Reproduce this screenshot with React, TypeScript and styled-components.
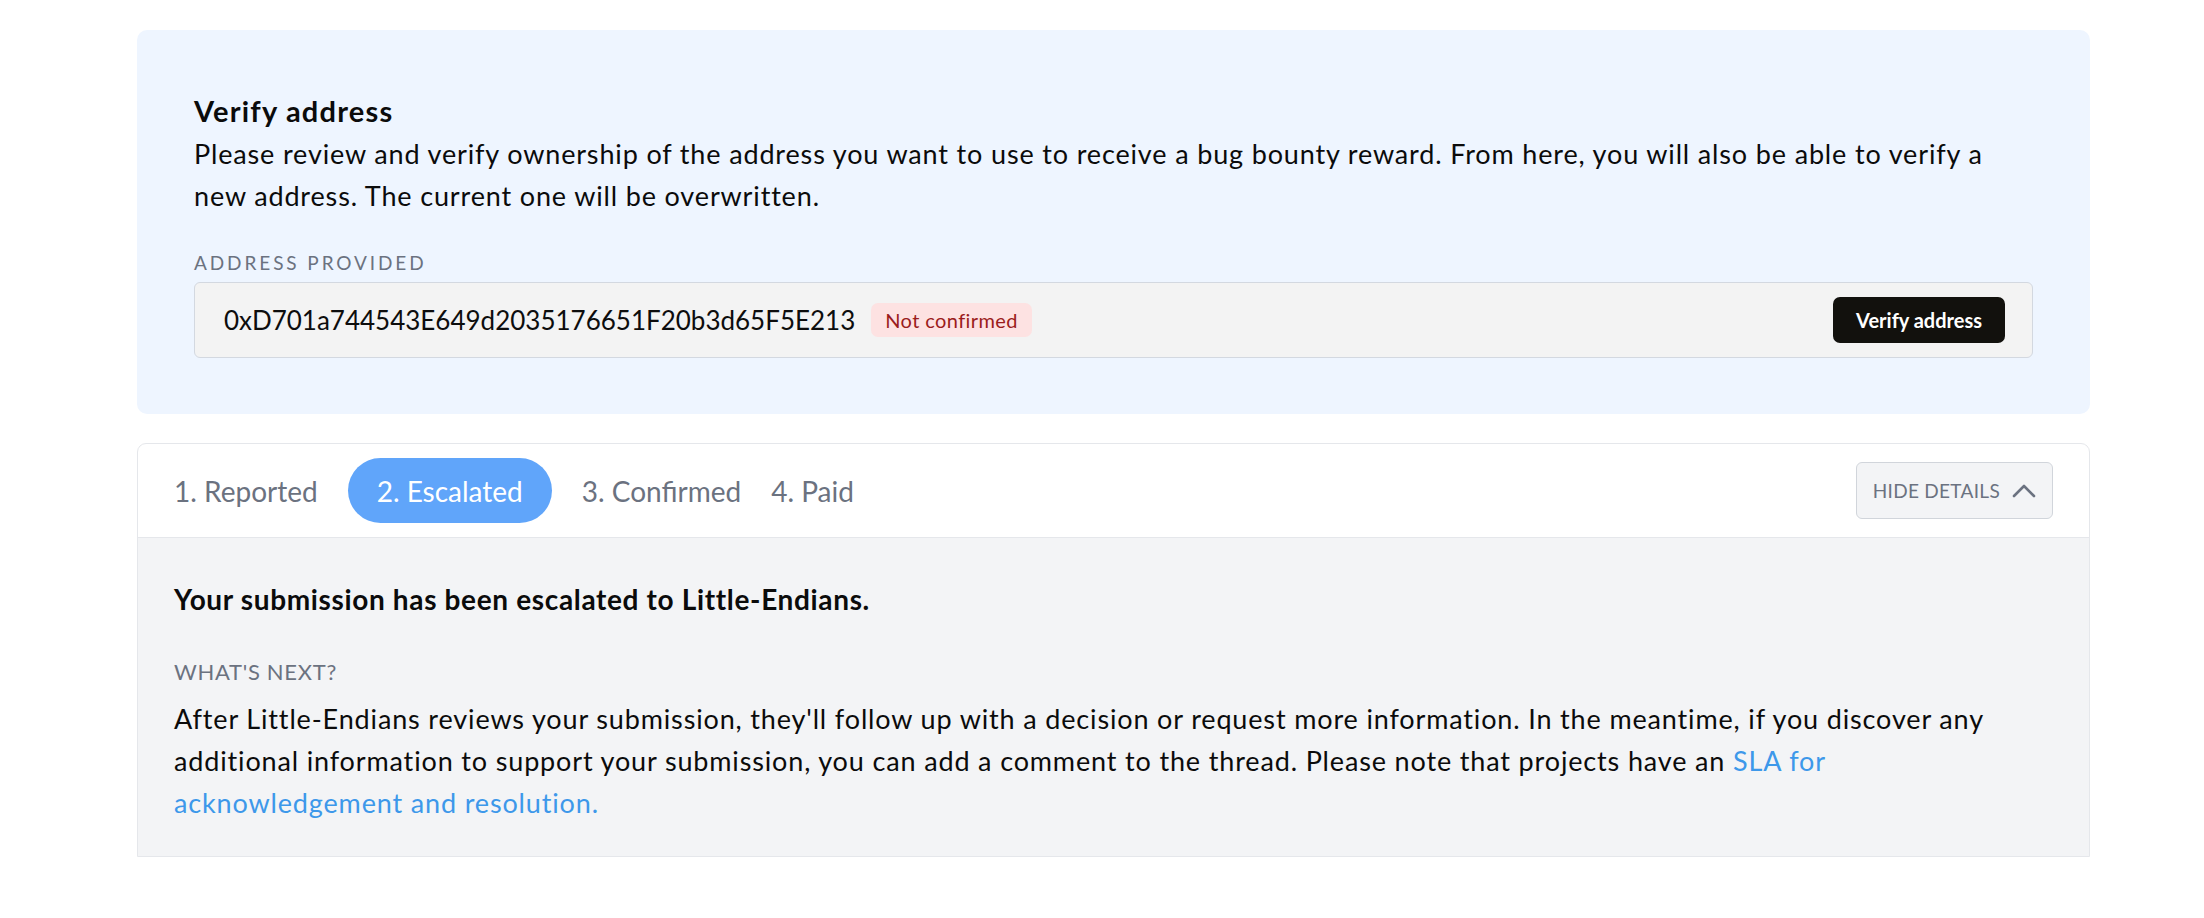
import React from "react";
import styled, { createGlobalStyle } from "styled-components";

const GlobalStyle = createGlobalStyle`
  html, body {
    margin: 0;
    padding: 0;
    background: #ffffff;
  }
  body {
    font-family: Lato, "Noto Sans", "Liberation Sans", sans-serif;
    color: #0b0b0b;
  }
`;

const Page = styled.div`
  display: flex;
  flex-direction: column;
  gap: 29px;
  width: 1953px;
  padding: 30px 0 40px 137px;
`;

const VerifyPanel = styled.section`
  background: #eef5ff;
  border-radius: 10px;
  padding: 58px 57px 56px;
  display: flex;
  flex-direction: column;
`;

const Title = styled.h2`
  margin: 0;
  font-size: 29px;
  line-height: 45px;
  letter-spacing: 1.2px;
  font-weight: 700;
`;

const Body = styled.p`
  margin: 0;
  font-size: 27px;
  line-height: 42px;
  letter-spacing: 0.85px;
  font-weight: 400;
`;

const FieldLabel = styled.div`
  margin-top: 32px;
  font-size: 19px;
  line-height: 28px;
  letter-spacing: 2.9px;
  text-transform: uppercase;
  color: #6b7280;
`;

const AddressField = styled.div`
  margin-top: 5px;
  display: flex;
  align-items: center;
  gap: 16px;
  height: 76px;
  box-sizing: border-box;
  padding: 0 27px 0 29px;
  background: #f3f3f3;
  border: 1px solid #d3d8e0;
  border-radius: 6px;
`;

const Address = styled.span`
  font-size: 26px;
  color: #0d0d0d;
`;

const Badge = styled.span`
  display: inline-flex;
  align-items: center;
  height: 34px;
  padding: 0 14px;
  border-radius: 7px;
  background: #fde2e2;
  color: #9b1c1c;
  font-size: 20px;
  letter-spacing: 0.4px;
`;

const DarkButton = styled.button`
  margin-left: auto;
  height: 46px;
  padding: 0 23px;
  border: none;
  border-radius: 7px;
  background: #12110d;
  color: #ffffff;
  font-family: inherit;
  font-size: 20px;
  font-weight: 700;
`;

const StatusCard = styled.section`
  background: #ffffff;
  border: 1px solid #e5e7eb;
  border-radius: 9px 9px 0 0;
  overflow: hidden;
`;

const CardHeader = styled.div`
  display: flex;
  align-items: center;
  height: 93px;
  padding: 0 36px;
  border-bottom: 1px solid #e5e7eb;
`;

const Steps = styled.ol`
  display: flex;
  align-items: center;
  gap: 30px;
  margin: 0;
  padding: 0;
  list-style: none;
`;

const Step = styled.li<{ $active?: boolean }>`
  display: flex;
  align-items: center;
  height: 65px;
  padding: ${(p) => (p.$active ? "0 29px" : "0")};
  border-radius: 999px;
  background: ${(p) => (p.$active ? "#60a5fa" : "transparent")};
  color: ${(p) => (p.$active ? "#ffffff" : "#6b7280")};
  font-size: 28px;
`;

const ToggleButton = styled.button`
  margin-left: auto;
  display: flex;
  align-items: center;
  gap: 12px;
  height: 57px;
  padding: 0 16px;
  background: #f3f4f6;
  border: 1px solid #d1d5db;
  border-radius: 6px;
  color: #6b7280;
  font-family: inherit;
  font-size: 19px;
  letter-spacing: 0.3px;
  text-transform: uppercase;
`;

const Chevron = styled.svg`
  width: 24px;
  height: 14px;
  fill: none;
  stroke: #6b7280;
  stroke-width: 2.6;
  stroke-linecap: round;
  stroke-linejoin: round;
`;

const CardContent = styled.div`
  background: #f3f4f6;
  padding: 40px 36px 32px;
  display: flex;
  flex-direction: column;
`;

const Headline = styled.h3`
  margin: 0;
  font-size: 28px;
  line-height: 42px;
  letter-spacing: 0.65px;
  font-weight: 700;
`;

const NextLabel = styled.div`
  margin-top: 37px;
  font-size: 22px;
  line-height: 30px;
  letter-spacing: 0.7px;
  color: #6b7280;
  text-transform: uppercase;
`;

const Paragraph = styled.p`
  margin: 11px 0 0;
  font-size: 27px;
  line-height: 42px;
  letter-spacing: 0.85px;
`;

const Link = styled.a`
  color: #3d98ea;
  text-decoration: none;
`;

const steps = ["1. Reported", "2. Escalated", "3. Confirmed", "4. Paid"];

export default function App() {
  return (
    <>
      <GlobalStyle />
      <Page>
        <VerifyPanel>
          <Title>Verify address</Title>
          <Body>
            Please review and verify ownership of the address you want to use to receive a bug bounty
            reward. From here, you will also be able to verify a new address. The current one will be
            overwritten.
          </Body>
          <FieldLabel>Address provided</FieldLabel>
          <AddressField>
            <Address>0xD701a744543E649d2035176651F20b3d65F5E213</Address>
            <Badge>Not confirmed</Badge>
            <DarkButton>Verify address</DarkButton>
          </AddressField>
        </VerifyPanel>

        <StatusCard>
          <CardHeader>
            <Steps>
              {steps.map((s, i) => (
                <Step key={s} $active={i === 1}>
                  {s}
                </Step>
              ))}
            </Steps>
            <ToggleButton>
              Hide details
              <Chevron viewBox="0 0 24 14">
                <polyline points="2,12 12,2 22,12" />
              </Chevron>
            </ToggleButton>
          </CardHeader>
          <CardContent>
            <Headline>Your submission has been escalated to Little-Endians.</Headline>
            <NextLabel>What's next?</NextLabel>
            <Paragraph>
              After Little-Endians reviews your submission, they'll follow up with a decision or request
              more information. In the meantime, if you discover any additional information to support
              your submission, you can add a comment to the thread. Please note that projects have an{" "}
              <Link href="#">SLA for acknowledgement and resolution.</Link>
            </Paragraph>
          </CardContent>
        </StatusCard>
      </Page>
    </>
  );
}
